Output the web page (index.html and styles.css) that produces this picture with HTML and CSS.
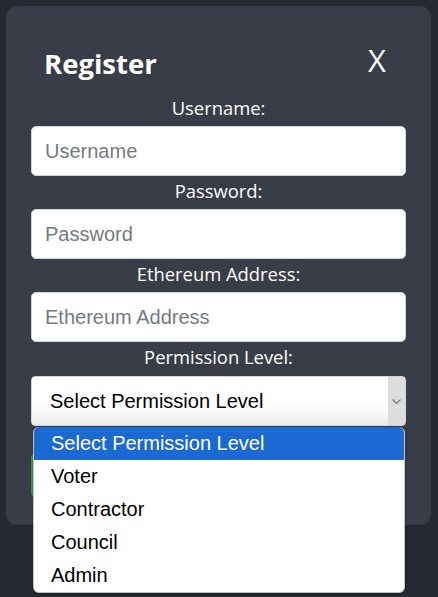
FILE: index.html
```html
<!DOCTYPE html>
<html lang="en">
<head>
<meta charset="utf-8">
<title>Register</title>
<link rel="stylesheet" href="styles.css">
</head>
<body>
<div class="card">
  <div class="header">
    <h2 class="title">Register</h2>
    <button class="close" type="button">X</button>
  </div>
  <form class="form">
    <label class="label">Username:</label>
    <input class="input" type="text" placeholder="Username">
    <label class="label">Password:</label>
    <input class="input" type="password" placeholder="Password">
    <label class="label">Ethereum Address:</label>
    <input class="input" type="text" placeholder="Ethereum Address">
    <label class="label">Permission Level:</label>
    <div class="select-wrap">
      <div class="select">
        <span class="select-text">Select Permission Level</span>
        <span class="select-arrow">
          <svg width="9" height="5" viewBox="0 0 9 5"><path d="M0.5 0.5 L4.5 4.5 L8.5 0.5" fill="none" stroke="#7a7a7a" stroke-width="1.2"/></svg>
        </span>
      </div>
      <ul class="dropdown">
        <li class="option option-active">Select Permission Level</li>
        <li class="option">Voter</li>
        <li class="option">Contractor</li>
        <li class="option">Council</li>
        <li class="option">Admin</li>
      </ul>
    </div>
    <button class="submit" type="button">Register</button>
  </form>
</div>
</body>
</html>
```
FILE: styles.css
```css
* { box-sizing: border-box; }
html, body { margin: 0; padding: 0; }
body {
  background: #262931;
  height: 597px;
  padding: 6px 7px 0 6px;
  font-family: "Open Sans", "Noto Sans", sans-serif;
}
.card {
  background: #393d47;
  border-radius: 11px;
  padding: 25px 25px 25px 25px;
  width: 425px;
}
.header {
  display: flex;
  justify-content: space-between;
  align-items: flex-start;
  padding: 16px 20px 12px 13px;
}
.title {
  margin: 0;
  color: #fff;
  font-size: 27.5px;
  font-weight: 700;
  line-height: 34px;
}
.close {
  background: none;
  border: 0;
  padding: 0;
  color: #fff;
  font-family: "Open Sans", "Noto Sans", sans-serif;
  font-size: 31px;
  line-height: 27px;
}
.form {
  display: flex;
  flex-direction: column;
}
.label {
  display: block;
  text-align: center;
  color: #fff;
  font-size: 18.4px;
  line-height: 24px;
  margin: 3px 0 6px;
}
.input {
  width: 100%;
  height: 50px;
  border: 1px solid #ced4da;
  border-radius: 5px;
  padding: 0 13px;
  font-family: "Liberation Sans", Arial, sans-serif;
  font-size: 20px;
  color: #495057;
  background: #fff;
}
.input::placeholder { color: #747b82; }
.select-wrap {
  position: relative;
  margin-top: 1px;
}
.select {
  height: 50px;
  border: 1px solid #d4d4d4;
  border-radius: 4px;
  background: linear-gradient(#ffffff 55%, #ececec);
  display: flex;
  align-items: center;
  justify-content: space-between;
  padding-left: 18px;
  overflow: hidden;
  font-family: "Liberation Sans", Arial, sans-serif;
  font-size: 20px;
  color: #000;
}
.select-arrow {
  width: 17px;
  height: 100%;
  background: #dddddd;
  display: flex;
  align-items: center;
  justify-content: center;
}
.dropdown {
  position: absolute;
  top: 51px;
  left: 2px;
  right: 1px;
  margin: 0;
  padding: 0;
  list-style: none;
  background: #fff;
  border: 1px solid #c4c4c4;
  border-top: 0;
  border-radius: 6px;
  overflow: hidden;
  box-shadow: 0 1px 3px rgba(0,0,0,0.3);
  z-index: 5;
}
.option {
  height: 33px;
  line-height: 33px;
  padding-left: 17px;
  font-family: "Liberation Sans", Arial, sans-serif;
  font-size: 20px;
  color: #000;
}
.option-active {
  background: #1b69d3;
  color: #fff;
}
.submit {
  margin: 27px 0 2px;
  height: 45px;
  width: 200px;
  background: #3c9b4a;
  border: 0;
  border-radius: 5px;
  color: #fff;
  font-size: 18px;
  font-family: "Open Sans", sans-serif;
}
```
